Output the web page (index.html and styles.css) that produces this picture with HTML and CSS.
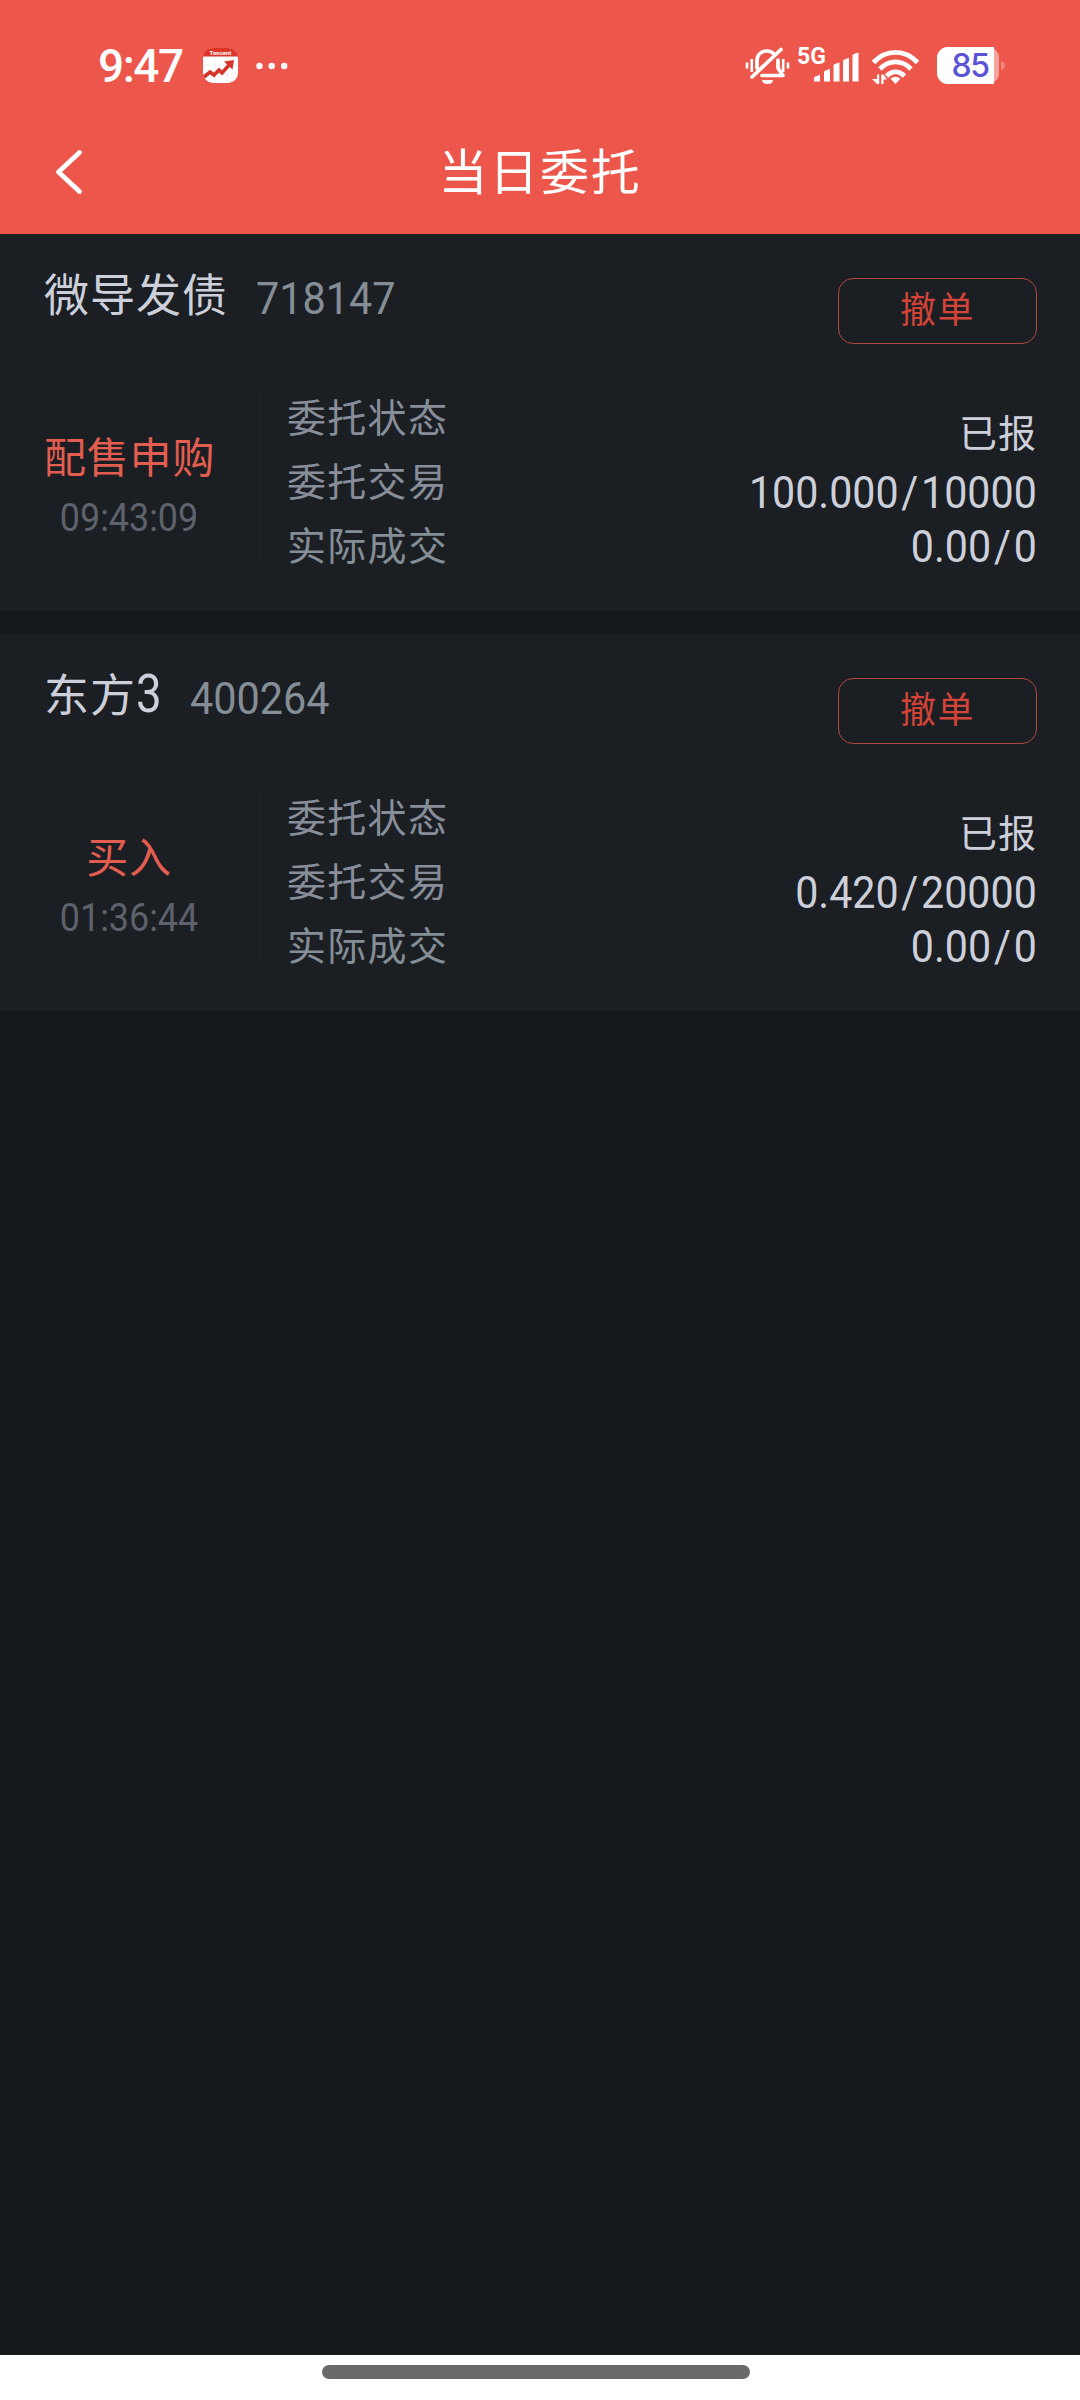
FILE: index.html
```
<!DOCTYPE html>
<html lang="zh-CN">
<head>
  <meta charset="UTF-8" />
  <meta name="viewport" content="width=device-width, initial-scale=1.0"/>
  <title>当日委托</title>
  <link rel="stylesheet" href="styles.css">
</head>
<body>
  <header>
    <div class="status">
      <span class="clock">9:47</span>
      <svg class="app" width="36" height="36" viewBox="0 0 36 36">
        <rect width="35" height="35" rx="10" fill="#fff"/>
        <path d="M0 8.500C1 3 5 0 10 0h15c5 0 9 3 10 8.500z" fill="#dc3528"/>
        <path d="M12 9v26M24 9v26M0 17h35M0 26h35" stroke="#eee" stroke-width="1"/>
        <text x="17.500" y="6.500" text-anchor="middle" class="app-text">Tencent</text>
        <path d="M1 29l6-5 4 3 5-5 3 3 8-9" fill="none" stroke="#d33529" stroke-width="3.600"/>
        <path d="M31 12l-10 1.500 8.500 8z" fill="#d33529"/>
      </svg>
      <svg class="more" width="32" height="8" viewBox="0 0 32 8">
        <g fill="#fff"><circle cx="3.500" cy="4" r="3.200"/><circle cx="15.700" cy="4" r="3.200"/><circle cx="28.200" cy="4" r="3.200"/></g>
      </svg>
      <svg class="bell" width="46" height="40" viewBox="0 0 46 40">
        <g fill="none" stroke="#fff" stroke-width="3.700" stroke-linecap="round" stroke-linejoin="round">
          <path d="M12 22v-7c0-6 4-10 10-10 3 0 5 1 6.500 2.500"/>
          <path d="M33 14v8l5 7.500H17"/>
          <path d="M7 31L36 3.500"/>
        </g>
        <path d="M17 34h11c-.5 3-2.500 4-5.500 4S17.500 37 17 34z" fill="#fff"/>
        <path d="M2 16.500v6M6.800 13v13M38.200 13v13M43 16.500v6" stroke="#fff" stroke-width="2.600"/>
      </svg>
      <svg class="signal" width="64" height="48" viewBox="0 -4 64 48">
        <text x="0" y="18" class="net">5G</text>
        <g fill="#fff">
          <path d="M17 35.500v-2.500q0-3 3-3l3-1.500v7z"/>
          <path d="M27 35.500V26q0-1.500 6-3v12.500z"/>
          <path d="M36.500 35.500V19.500q0-1.500 6-3v19z"/>
          <path d="M46 35.500V15q0-1.500 6-3v23.500z"/>
          <path d="M55.500 35.500V9.500q0-1.500 6-3v29z"/>
        </g>
      </svg>
      <svg class="wifi" width="48" height="40" viewBox="0 0 48 40">
        <g fill="none" stroke="#fff" stroke-width="4.800">
          <path d="M1.500 16.500C14 3 33 3 45.500 16.500"/>
          <path d="M8 23C17 13.500 30 13.500 39 23"/>
          <path d="M14.500 30C20 24.500 27 24.500 32.500 30"/>
        </g>
        <path d="M23.500 38l-5-5.200q5-4 10 0z" fill="#fff"/>
        <path d="M0 33h5v5zM5 28.500h2.200V38H5zM9.300 28.500h2.200V38H9.300zM11.500 28.500v5H15z" fill="#fff"/>
      </svg>
      <svg class="battery" width="70" height="40" viewBox="0 0 70 40">
        <rect x="0" y="3" width="62" height="37" rx="11" fill="#f5a59e"/>
        <path d="M11 3h46v37H11A11 11 0 0 1 0 29V14A11 11 0 0 1 11 3z" fill="#fff"/>
        <path d="M64 17q4 1 4 4.500t-4 4.500z" fill="#f2857b"/>
        <text x="33" y="33" text-anchor="middle" class="level">85</text>
      </svg>
    </div>
    <div class="title">
      <svg class="back" width="28" height="48" viewBox="0 0 28 48">
        <path d="M25.500 4.500L4.500 24l21 19.500" fill="none" stroke="#fff" stroke-width="4.800" stroke-linecap="round" stroke-linejoin="round"/>
      </svg>
      <h1>当日委托</h1>
    </div>
  </header>

  <main>
    <section class="order">
      <div class="order-head">
        <div class="stock"><span class="name">微导发债</span><span class="code first">718147</span></div>
        <button class="cancel">撤单</button>
      </div>
      <div class="order-body">
        <div class="side">
          <div class="type">配售申购</div>
          <div class="time">09:43:09</div>
        </div>
        <div class="labels">
          <div>委托状态</div>
          <div>委托交易</div>
          <div class="deal">实际成交</div>
        </div>
        <div class="values">
          <div class="state">已报</div>
          <div class="num">100.000<i>/</i>10000</div>
          <div class="num">0.00<i>/</i>0</div>
        </div>
      </div>
    </section>

    <section class="order">
      <div class="order-head">
        <div class="stock"><span class="name">东方<b>3</b></span><span class="code">400264</span></div>
        <button class="cancel">撤单</button>
      </div>
      <div class="order-body">
        <div class="side">
          <div class="type">买入</div>
          <div class="time">01:36:44</div>
        </div>
        <div class="labels">
          <div>委托状态</div>
          <div>委托交易</div>
          <div class="deal">实际成交</div>
        </div>
        <div class="values">
          <div class="state">已报</div>
          <div class="num">0.420<i>/</i>20000</div>
          <div class="num">0.00<i>/</i>0</div>
        </div>
      </div>
    </section>
  </main>

  <footer><div class="home-bar"></div></footer>
</body>
</html>
```
FILE: styles.css
```
* { box-sizing: border-box; }
body {
  margin: 0;
  height: 2400px;
  display: flex;
  flex-direction: column;
  background: #14191c;
  color: #cdd0db;
  font-family: "Noto Sans CJK SC", sans-serif;
}
svg { display: block; flex: none; overflow: visible; }

header { height: 234px; background: #ed564a; color: #fff; }
.status {
  display: flex;
  align-items: center;
  height: 132px;
  padding: 0 73px 0 98px;
}
.clock {
  width: 105px;
  font: 500 46px/1 Roboto, sans-serif;
  letter-spacing: -1.5px;
}
.app { margin-right: 17px; }
.app-text { font: 700 6px Roboto, sans-serif; fill: #fff; }
.bell { margin-left: auto; margin-right: 6px; }
.net { font: 700 23px Roboto, sans-serif; fill: #fff; }
.signal { margin-right: 11px; }
.wifi { margin-right: 17px; }
.battery { margin-bottom: 5px; }
.level { font: 500 32px Inter, sans-serif; fill: #5b53d6; letter-spacing: -1.5px; }

.title {
  display: grid;
  grid-template-columns: 60px 1fr 60px;
  align-items: center;
  height: 80px;
  padding: 0 54px;
}
h1 {
  margin: 0;
  padding-bottom: 7px;
  text-align: center;
  font-size: 49px;
  line-height: 72px;
  font-weight: 400;
  letter-spacing: 1.8px;
}

.order {
  height: 377px;
  margin-bottom: 23px;
  padding: 44px 43px 0 44px;
  background: #1b1f23;
}
.order-head { display: flex; justify-content: space-between; height: 105px; }
.stock { display: flex; align-items: baseline; height: 60px; margin-top: -18px; }
.name { font-size: 45px; letter-spacing: 1px; }
.name b {
  display: inline-block;
  width: 26px;
  font: 400 53px/1 Roboto, sans-serif;
  transform: scaleX(.86);
  transform-origin: left;
}
/* narrow figures */
.code {
  margin-left: 28px;
  padding-top: 2px;
  font: 400 45px Roboto, sans-serif;
  color: #858e97;
  transform: translateY(2px) scaleX(.92);
  transform-origin: left;
}
.cancel {
  width: 199px;
  height: 66px;
  padding: 0 0 8px;
  border: 1.500px solid #b2463f;
  border-radius: 15px;
  background: none;
  color: #d34338;
  font: 400 36px/56px "Noto Sans CJK SC", sans-serif;
  letter-spacing: 1.5px;
}

.order-body { display: flex; }
.side { width: 170px; padding-top: 40px; text-align: center; white-space: nowrap; }
.type { font-size: 42px; line-height: 64px; letter-spacing: .8px; color: #e35d50; }
.time {
  font: 400 39px/62px Roboto, sans-serif;
  color: #5e626d;
  transform: scaleX(.92);
}
.labels {
  margin-left: 45px;
  padding-left: 28px;
  background: linear-gradient(#202329, #202329) 0 10px / 1px 172px no-repeat;
  font-size: 39px;
  line-height: 64px;
  letter-spacing: 1.3px;
  color: #888d9a;
}
.deal { color: #848e97; }
.values {
  flex: 1;
  padding-top: 18px;
  text-align: right;
}
.num {
  font: 400 45px/54px Roboto, sans-serif;
  transform: translateY(1px) scaleX(.915);
  transform-origin: right;
}
.num i { font-style: normal; margin: 0 3px; }
.state {
  font-size: 38px;
  line-height: 60px;
  letter-spacing: 1px;
  padding-bottom: 4px;
}

footer { height: 45px; margin-top: auto; padding: 10px 0 0 322px; background: #fff; }
.home-bar { width: 428px; height: 14px; border-radius: 7px; background: #696969; }
```
